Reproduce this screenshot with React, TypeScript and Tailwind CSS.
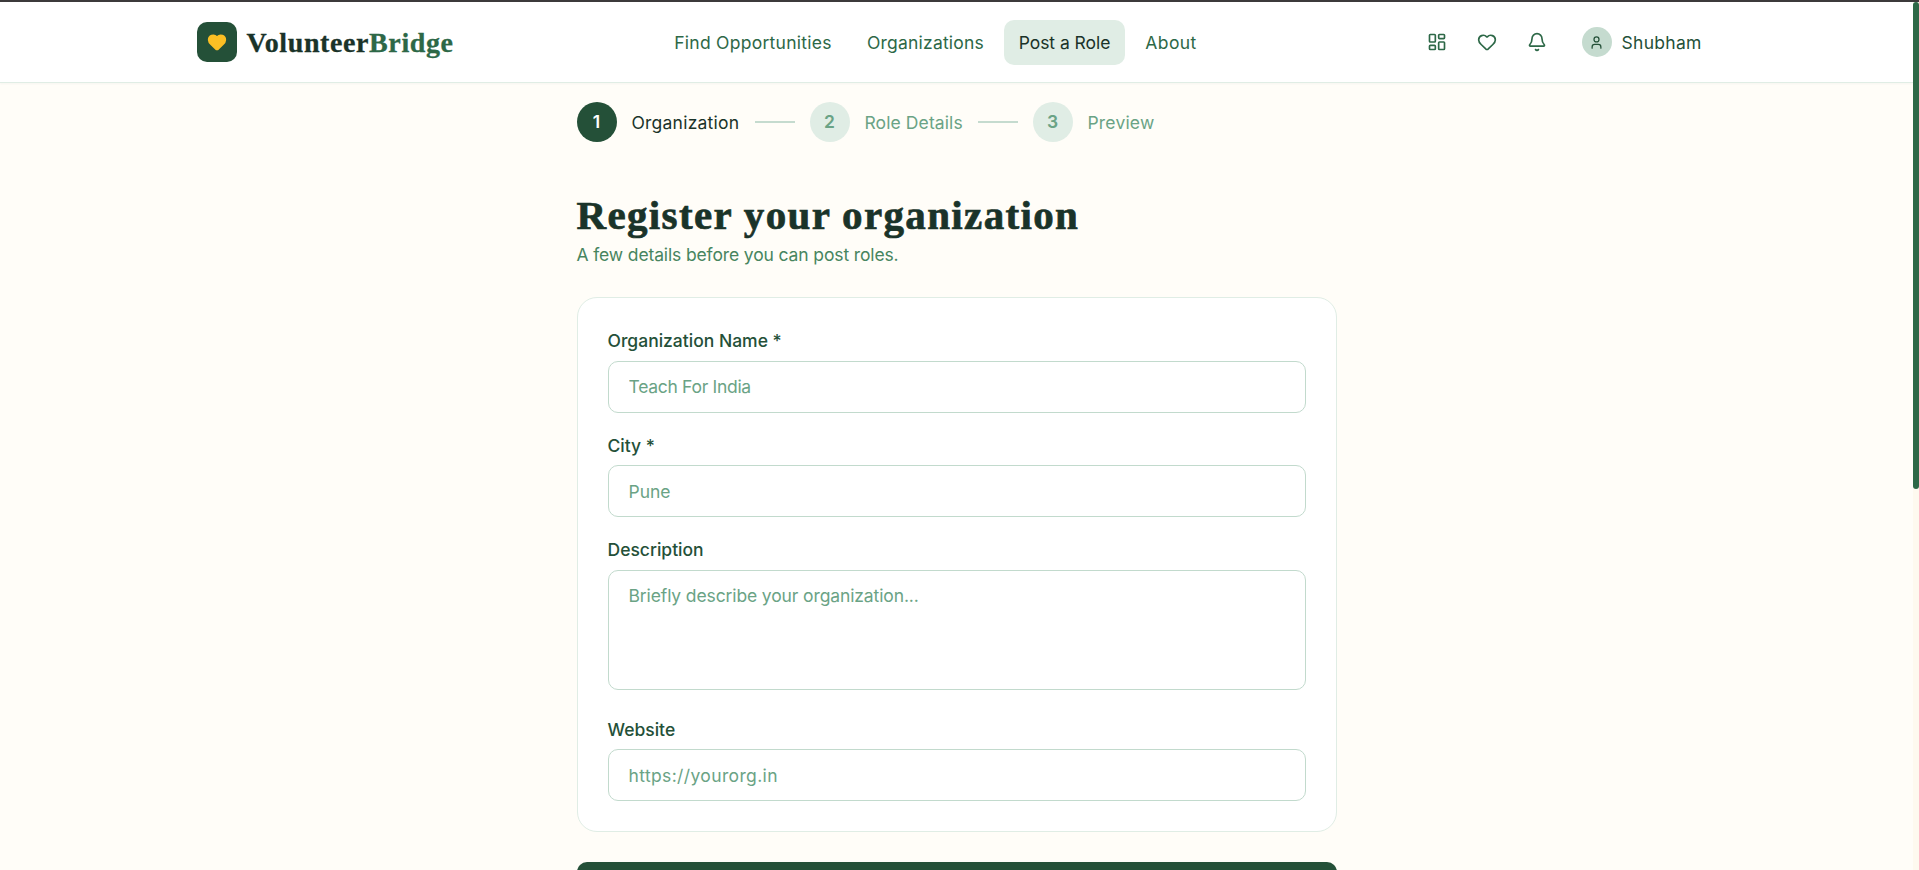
import type { ReactNode } from "react";
import { Bell, Heart, LayoutDashboard, User } from "lucide-react";

const navLinks = [
  { label: "Find Opportunities", width: "w-[188px]", tracking: "tracking-[0.27px]" },
  { label: "Organizations", width: "w-[147px]", tracking: "tracking-[0.2px]" },
  { label: "Post a Role", width: "w-[121px]", tracking: "tracking-[-0.05px]", active: true },
  { label: "About", width: "w-[82px]", tracking: "tracking-[0.4px]" },
];

const steps = [
  { label: "Organization", width: "w-[108px]", tracking: "tracking-[0.22px]", active: true },
  { label: "Role Details", width: "w-[98px]", tracking: "tracking-[0.1px]" },
  { label: "Preview", width: "w-[68px]", tracking: "tracking-[0.18px]" },
];

const inputClass =
  "block w-full rounded-[10px] border border-[#c2dacd] bg-white px-5 text-[17.5px] leading-[25px] text-[#1a3329] outline-none placeholder:text-[#6aa385]";

function Header() {
  return (
    <header className="relative h-[81px] shrink-0 border-b border-[#e0ede5] bg-white shadow-[0_1px_2px_rgba(26,51,41,0.04)]">
      <div className="mx-auto flex h-20 w-[1520px] items-center justify-between">
        <a href="#" className="flex w-[258px] items-center gap-[10px]">
          <span className="flex size-10 shrink-0 items-center justify-center rounded-[10px] bg-[#245038]">
            <Heart className="size-5 fill-[#fbbf24] text-[#fbbf24]" />
          </span>
          <span className="pt-0.5 font-['Liberation_Serif',serif] text-[28px] leading-none font-bold tracking-[0.6px] whitespace-nowrap text-[#1a3329] [-webkit-text-stroke:0.3px]">
            Volunteer<span className="text-[#2d6847]">Bridge</span>
          </span>
        </a>

        <nav className="flex items-center gap-[5px]">
          {navLinks.map((link) => (
            <a
              key={link.label}
              href="#"
              className={`flex h-[45px] items-center justify-center rounded-[10px] pt-0.5 text-[17.5px] whitespace-nowrap ${link.width} ${link.tracking} ${
                link.active ? "bg-[#e0ede5] text-[#1a3329]" : "text-[#2d6847]"
              }`}
            >
              {link.label}
            </a>
          ))}
        </nav>

        <div className="flex w-[300px] items-center justify-end text-[#2d6847]">
          <div className="flex gap-[10px]">
            <button className="p-[10px]">
              <LayoutDashboard className="size-5" />
            </button>
            <button className="p-[10px]">
              <Heart className="size-5" />
            </button>
            <button className="p-[10px]">
              <Bell className="size-5" />
            </button>
          </div>
          <button className="ml-[10px] flex items-center gap-[10px] px-[15px]">
            <span className="flex size-[30px] items-center justify-center rounded-full bg-[#c5dbcf]">
              <User className="size-[15px] text-[#245038]" />
            </span>
            <span className="w-[80px] pt-0.5 text-left text-[17.5px] tracking-[0.3px] text-[#245038]">
              Shubham
            </span>
          </button>
        </div>
      </div>
    </header>
  );
}

function Stepper() {
  return (
    <div className="flex h-10 items-center gap-[15px]">
      {steps.map((step, i) => (
        <div key={step.label} className="flex items-center gap-[15px]">
          <span
            className={`flex size-10 items-center justify-center rounded-full text-[17.5px] font-semibold ${
              step.active ? "bg-[#245038] text-white" : "bg-[#e0ede5] text-[#6aa385]"
            }`}
          >
            {i + 1}
          </span>
          <span
            className={`pt-0.5 text-[17.5px] whitespace-nowrap ${step.width} ${step.tracking} ${
              step.active ? "text-[#1a3329]" : "text-[#6aa385]"
            }`}
          >
            {step.label}
          </span>
          {i < steps.length - 1 && <span className="h-0.5 w-10 bg-[#c5dbcf]" />}
        </div>
      ))}
    </div>
  );
}

function Field({ label, children }: { label: string; children: ReactNode }) {
  return (
    <label className="block">
      <span className="mb-[7.5px] block text-[17.5px] leading-[25px] font-medium text-[#245038]">
        {label}
      </span>
      {children}
    </label>
  );
}

export default function App() {
  return (
    <div className="flex h-screen flex-col overflow-hidden bg-[#fffdf8] font-[Inter,sans-serif]">
      <div className="h-0.5 shrink-0 bg-[#3c3a3b]" />
      <div className="flex min-h-0 flex-1">
        <div className="flex min-w-0 flex-1 flex-col overflow-hidden">
          <Header />
          <main className="mx-auto w-[760px] pt-[19px]">
            <Stepper />
            <h1 className="mt-[50px] h-[47px] font-['Liberation_Serif',serif] text-[41px] leading-[47px] font-bold tracking-[1.35px] whitespace-nowrap text-[#1a3329] [-webkit-text-stroke:0.7px]">
              Register your organization
            </h1>
            <p className="mt-[3px] text-[17.5px] leading-[25px] tracking-[-0.13px] whitespace-nowrap text-[#47855f]">
              A few details before you can post roles.
            </p>

            <form className="mt-[30.25px] rounded-[20px] border border-[#e0ede5] bg-white p-[30px]">
              <div className="flex flex-col gap-5">
                <Field label="Organization Name *">
                  <input
                    className={`${inputClass} h-[52px] tracking-[-0.3px]`}
                    placeholder="Teach For India"
                  />
                </Field>
                <Field label="City *">
                  <input className={`${inputClass} h-[52px]`} placeholder="Pune" />
                </Field>
                <Field label="Description">
                  <textarea
                    className={`${inputClass} mb-[7px] h-[120px] resize-none py-3 tracking-[-0.12px]`}
                    placeholder="Briefly describe your organization..."
                  />
                </Field>
                <Field label="Website">
                  <input
                    className={`${inputClass} h-[52px] tracking-[0.37px]`}
                    placeholder="https://yourorg.in"
                  />
                </Field>
              </div>
            </form>
            <button className="mt-[29.75px] block h-[55px] w-full rounded-[10px] bg-[#245038] text-[17.5px] font-semibold text-white" />
          </main>
        </div>
        <div className="w-1.5 shrink-0 bg-[#fef9ef]">
          <div className="h-[487px] rounded-[3px] bg-[#2d6847]" />
        </div>
      </div>
    </div>
  );
}
